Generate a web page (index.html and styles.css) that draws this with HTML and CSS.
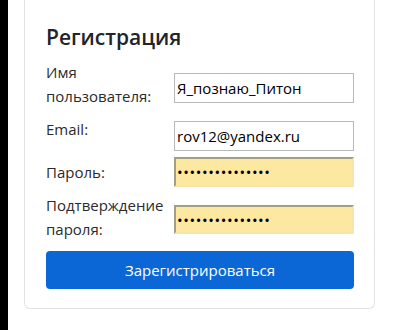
FILE: index.html
```html
<!DOCTYPE html>
<html lang="ru">
<head>
    <meta charset="UTF-8">
    <meta name="viewport" content="width=device-width, initial-scale=1.0">
    <title>Регистрация</title>
    <link rel="stylesheet" href="styles.css">
</head>
<body>
    <div class="edge"></div>

    <div class="page">
        <div class="card">
            <h2>Регистрация</h2>
            <form class="regForm">
                <div class="row row-user">
                    <label for="username">Имя пользователя:</label>
                    <input type="text" id="username" value="Я_познаю_Питон">
                </div>
                <div class="row row-email">
                    <label for="email">Email:</label>
                    <input type="text" id="email" value="rov12@yandex.ru">
                </div>
                <div class="row row-pass">
                    <label for="password1">Пароль:</label>
                    <input type="password" id="password1" class="autofill" value="123456789012345">
                </div>
                <div class="row row-pass2">
                    <label for="password2">Подтверждение пароля:</label>
                    <input type="password" id="password2" class="autofill" value="123456789012345">
                </div>
                <button type="button" class="btn">Зарегистрироваться</button>
            </form>
        </div>
    </div>
</body>
</html>
```

FILE: styles.css
```css
*{
    margin: 0;
    padding: 0;
    box-sizing: border-box;
}

body{
    display: flex;
    min-height: 330px;
    background-color: #fff;
    font-family: "Open Sans", "Noto Sans", sans-serif;
    color: #212529;
}

.edge{
    width: 8px;
    background-color: #000;
}

.page{
    flex: 1;
    padding: 0 18px 0 16px;
}

.card{
    border: 1px solid #e1e3e5;
    border-top: 0;
    border-radius: 0 0 6px 6px;
    padding: 22px 20px 19px 21px;
}

.card h2{
    font-size: 21px;
    font-weight: 600;
    line-height: 30px;
    margin-bottom: 8px;
}

.regForm{
    display: flex;
    flex-direction: column;
}

.row{
    display: flex;
    align-items: flex-start;
}

.row label{
    width: 128px;
    font-size: 15px;
    line-height: 24px;
    color: #2b2b2b;
}

.row input{
    width: 180px;
    height: 30px;
    padding: 0 2px;
    border: 1px solid #b9b9b9;
    font-family: "Open Sans", "Noto Sans", sans-serif;
    font-size: 15px;
    color: #000;
    background: #fff;
    outline: none;
}

.row-user input{
    margin-top: 13px;
}

.row-email{
    margin-top: 9px;
}

.row-email input{
    margin-top: 4px;
}

.row-pass{
    margin-top: 6px;
}

.row-pass label{
    padding-top: 3px;
}

.row-pass2{
    margin-top: 6px;
}

.row-pass2 input{
    margin-top: 12px;
    height: 29px;
}

.row input.autofill{
    background-color: #fde8a1;
    border-top: 2px solid #a59d89;
    border-left: 2px solid #a59d89;
    border-right: 2px solid #f6e6ad;
    border-bottom: 2px solid #f6e6ad;
    padding: 0 1px;
    font-size: 15px;
    letter-spacing: 0.6px;
}

.btn{
    margin-top: 10px;
    height: 38px;
    width: 308px;
    background-color: #0b67d5;
    color: #fff;
    border: 0;
    border-radius: 4px;
    font-family: "Open Sans", "Noto Sans", sans-serif;
    font-size: 15px;
    cursor: pointer;
}
```
